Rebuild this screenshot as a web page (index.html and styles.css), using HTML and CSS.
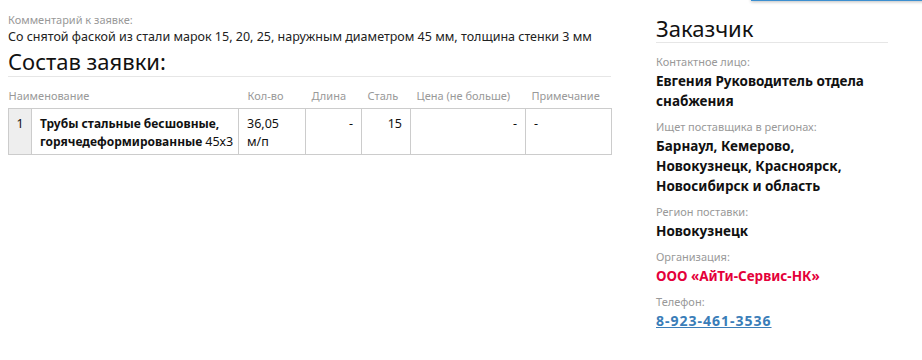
FILE: index.html
```html
<!DOCTYPE html>
<html lang="ru">
<head>
    <meta charset="UTF-8">
    <title>Заявка</title>
    <link rel="stylesheet" href="styles.css">
</head>
<body>
<div class="top-btn"></div>
<div class="page">
    <div class="order">
        <div class="label">Комментарий к заявке:</div>
        <div class="comment">Со снятой фаской из стали марок 15, 20, 25, наружным диаметром 45 мм, толщина стенки 3 мм</div>
        <h2 class="title">Состав заявки:</h2>
        <table class="items">
            <colgroup>
                <col class="c-num">
                <col class="c-name">
                <col class="c-qty">
                <col class="c-len">
                <col class="c-steel">
                <col class="c-price">
                <col class="c-note">
            </colgroup>
            <thead>
            <tr>
                <th colspan="2" class="first">Наименование</th>
                <th class="qty-h">Кол-во</th>
                <th>Длина</th>
                <th>Сталь</th>
                <th>Цена (не больше)</th>
                <th>Примечание</th>
            </tr>
            </thead>
            <tbody>
            <tr>
                <td class="num">1</td>
                <td class="name"><b>Трубы стальные бесшовные,</b><br><b>горячедеформированные</b><span class="size">45х3</span></td>
                <td>36,05 <span class="nowrap">м/п</span></td>
                <td class="right">-</td>
                <td class="right">15</td>
                <td class="right">-</td>
                <td>-</td>
            </tr>
            </tbody>
        </table>
    </div>
    <div class="customer">
        <h2 class="title">Заказчик</h2>
        <div class="label">Контактное лицо:</div>
        <div class="value">Евгения Руководитель отдела снабжения</div>
        <div class="label">Ищет поставщика в регионах:</div>
        <div class="value">Барнаул, Кемерово, Новокузнецк, Красноярск, Новосибирск и область</div>
        <div class="label">Регион поставки:</div>
        <div class="value">Новокузнецк</div>
        <div class="label">Организация:</div>
        <div class="value org">ООО «АйТи-Сервис-НК»</div>
        <div class="label">Телефон:</div>
        <div class="value"><a class="phone" href="#">8-923-461-3536</a></div>
    </div>
</div>
</body>
</html>
```

FILE: styles.css
```css
body {
    margin: 0;
    font-family: "Noto Sans", "Open Sans", sans-serif;
    color: #111;
    background: #fff;
}

.top-btn {
    position: absolute;
    top: -20px;
    left: 751px;
    width: 180px;
    height: 21px;
    background: #3c8fd0;
    box-shadow: 0 1px 3px rgba(0, 0, 0, 0.25);
}

.page {
    display: flex;
    padding: 13px 0 0 8px;
    gap: 45px;
}

.order {
    width: 603px;
}

.customer {
    width: 232px;
    padding-top: 3px;
}

.label {
    font-size: 11px;
    line-height: 14px;
    color: #999;
}

.comment {
    font-size: 12.5px;
    line-height: 20px;
    color: #222;
}

.title {
    margin: 0;
    font-size: 22px;
    font-weight: normal;
    line-height: 24px;
    padding-bottom: 2px;
    border-bottom: 1px solid #e6e6e6;
}

.order .title {
    margin: 2px 0 12px;
    padding-bottom: 3px;
}

.customer .title {
    margin-bottom: 12px;
}

.items {
    width: 603px;
    table-layout: fixed;
    border-collapse: collapse;
    font-size: 12.5px;
}

.c-num { width: 23px; }
.c-name { width: 207px; }
.c-qty { width: 67px; }
.c-len { width: 56px; }
.c-steel { width: 49px; }
.c-price { width: 115px; }
.c-note { width: 86px; }

.items th {
    font-size: 11px;
    font-weight: normal;
    color: #999;
    text-align: left;
    padding: 0 0 5px 6px;
    line-height: 14px;
    white-space: nowrap;
}

.items th.first {
    padding-left: 0;
}

.items th.qty-h {
    padding-left: 9px;
}

.items td {
    border: 1px solid #ccc;
    padding: 6px 8px 3px;
    vertical-align: top;
    line-height: 18px;
}

.items td.num {
    background: #eee;
    padding: 6px 0 3px;
    text-align: center;
}

.items td.name {
    padding-right: 2px;
    white-space: nowrap;
}

.items td.name b {
    font-size: 12px;
}

.items td.name .size {
    margin-left: 3px;
}

.items td.right {
    text-align: right;
}

.nowrap {
    white-space: nowrap;
}

.value {
    font-size: 13.5px;
    font-weight: bold;
    line-height: 20px;
    margin: 2px 0 9px;
}

.org {
    color: #e4003a;
}

.phone {
    color: #3a7db8;
    font-size: 14px;
    letter-spacing: 1px;
}
```
